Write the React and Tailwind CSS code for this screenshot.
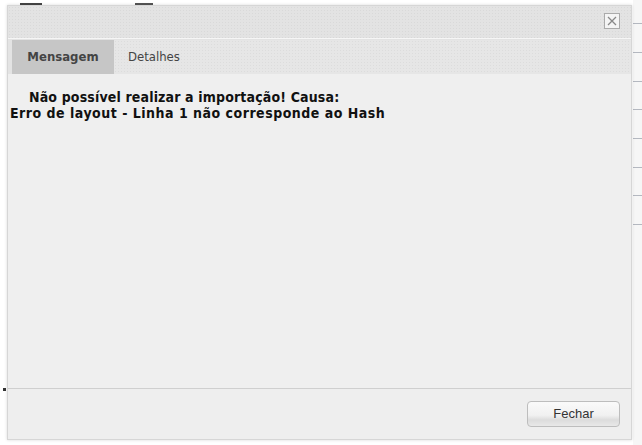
export default function App() {
  const ticks = [23, 52, 81, 109, 138, 167, 195, 224];
  return (
    <div className="w-[642px] h-[445px] bg-white relative overflow-hidden font-['Liberation_Sans',sans-serif]">
      {/* page remnants behind the dialog */}
      <div className="absolute left-[20px] top-[3px] w-[22px] h-[2px] bg-[#444]" />
      <div className="absolute left-[135px] top-[3px] w-[18px] h-[2px] bg-[#555]" />
      <div className="absolute left-[3px] top-[388px] w-[3px] h-[3px] bg-[#333]" />
      <div className="absolute left-[633px] top-0 w-[9px] h-[445px] bg-[#f6f6f6]">
        {ticks.map((t) => (
          <div key={t} className="absolute left-0 w-[9px] h-[1px] bg-[#b4b8c0]" style={{ top: t }} />
        ))}
      </div>

      <div className="absolute left-[7px] top-[5px] w-[625px] h-[435px] flex flex-col bg-[#efefef] border border-[#d6d6d6] shadow-[0_0_3px_rgba(0,0,0,0.15)]">
        <div className="h-[32px] shrink-0 bg-[#e3e3e3] bg-[radial-gradient(#d9d9d9_0.6px,transparent_0.8px)] bg-[length:3px_3px] flex justify-end items-start pr-[11px] pt-[7px]">
          <div className="w-[16px] h-[16px] border border-[#aaa] bg-[#f4f4f4] flex items-center justify-center">
            <svg width="10" height="10" viewBox="0 0 10 10">
              <path d="M1 1 L9 9 M9 1 L1 9" stroke="#888" strokeWidth="1.3" />
            </svg>
          </div>
        </div>
        <div className="h-[1px] shrink-0 bg-[#f6f6f6]" />
        <div className="flex shrink-0 bg-[#e3e3e3] pl-[4px]">
          <div className="flex-1 h-[34px] mt-[1px] bg-[#e6e6e6] bg-[radial-gradient(#dcdcdc_0.6px,transparent_0.8px)] bg-[length:3px_3px] flex text-[13px] font-['DejaVu_Sans_Condensed','DejaVu_Sans',sans-serif]">
            <div className="w-[102px] h-full bg-[#c6c6c6] flex items-center justify-center font-bold text-[#444]">
              Mensagem
            </div>
            <div className="pl-[14px] h-full flex items-center text-[#444]">
              Detalhes
            </div>
          </div>
        </div>
        <div className="flex-1 bg-[#efefef] border-b border-[#cfcfcf] pt-[15px] pl-[2px] font-['DejaVu_Sans_Condensed','DejaVu_Sans',sans-serif] font-bold text-[14px] leading-[16px] text-[#111]">
          <div className="pl-[19px] tracking-[0.15px]">Não possível realizar a importação! Causa:</div>
          <div className="tracking-[0.5px]">Erro de layout - Linha 1 não corresponde ao Hash</div>
        </div>
        <div className="h-[50px] shrink-0 bg-[#eeeeee] flex justify-end items-start pt-[12px] pr-[11px]">
          <button className="w-[93px] h-[26px] rounded-[4px] border border-[#bdbdbd] bg-[linear-gradient(#fafafa,#f1f1f1_55%,#dcdcdc_75%,#e8e8e8)] text-[13px] text-[#333] font-['Liberation_Sans',sans-serif]">
            Fechar
          </button>
        </div>
      </div>
    </div>
  );
}
